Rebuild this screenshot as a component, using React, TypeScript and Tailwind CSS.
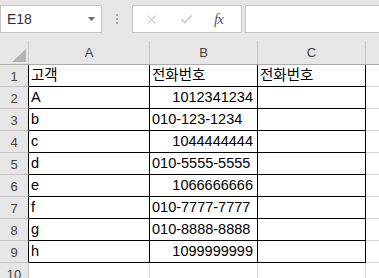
import { X, Check } from "lucide-react";

const rows: { a: string; b: string; right?: boolean; c: string }[] = [
  { a: "고객", b: "전화번호", c: "전화번호" },
  { a: "A", b: "1012341234", right: true, c: "" },
  { a: "b", b: "010-123-1234", c: "" },
  { a: "c", b: "1044444444", right: true, c: "" },
  { a: "d", b: "010-5555-5555", c: "" },
  { a: "e", b: "1066666666", right: true, c: "" },
  { a: "f", b: "010-7777-7777", c: "" },
  { a: "g", b: "010-8888-8888", c: "" },
  { a: "h", b: "1099999999", right: true, c: "" },
];

const font = "font-['Liberation_Sans','Noto_Sans_CJK_KR',sans-serif]";

function Toolbar() {
  return (
    <div className="h-[41px] flex items-start pt-[5px] bg-[#e6e6e6]">
      <div className="w-[102px] h-[28px] bg-white border border-[#c6c6c6] flex items-center pl-[6px] pr-[6px]">
        <span className="flex-1 text-[14px] text-[#333]">E18</span>
        <svg width="7" height="4" viewBox="0 0 7 4">
          <polygon points="0,0 7,0 3.5,4" fill="#6b6b6b" />
        </svg>
      </div>
      <div className="w-[30px] h-[28px] flex flex-col items-center justify-center gap-[2px]">
        <span className="w-[2px] h-[2px] bg-[#a6a6a6]" />
        <span className="w-[2px] h-[2px] bg-[#a6a6a6]" />
        <span className="w-[2px] h-[2px] bg-[#a6a6a6]" />
      </div>
      <div className="w-[110px] h-[28px] bg-white border border-[#c6c6c6] flex items-center pl-[11px]">
        <X className="w-[15px] h-[15px] text-[#bdbdbd]" strokeWidth={1.5} />
        <Check className="w-[15px] h-[15px] text-[#bdbdbd] ml-[20px]" strokeWidth={1.8} />
        <span className="ml-[20px] font-['Liberation_Serif',serif] italic text-[15px] text-[#5a5a5a] tracking-[-1px]">
          fx
        </span>
      </div>
      <div className="flex-1 ml-[3px] h-[28px] bg-white border border-[#c6c6c6] border-r-0" />
    </div>
  );
}

function HeaderRow() {
  return (
    <div className="flex h-[24px] border-b border-[#ababab] bg-[#e6e6e6] text-[13px] text-[#444]">
      <div className="w-[29px] shrink-0 border-r border-[#c6c6c6] flex items-end justify-end pr-[2px] pb-[2px]">
        <svg width="14" height="13" viewBox="0 0 14 13">
          <polygon points="14,0 14,13 0,13" fill="#b4b4b4" />
        </svg>
      </div>
      <div className="w-[121px] shrink-0 border-r border-[#c6c6c6] flex items-center justify-center">A</div>
      <div className="w-[108px] shrink-0 border-r border-[#c6c6c6] flex items-center justify-center">B</div>
      <div className="w-[108px] shrink-0 border-r border-[#c6c6c6] flex items-center justify-center">C</div>
      <div className="flex-1" />
    </div>
  );
}

export default function App() {
  return (
    <div className={`w-[379px] h-[278px] overflow-hidden bg-white ${font}`}>
      <Toolbar />
      <HeaderRow />
      {rows.map((r, i) => (
        <div key={i} className="flex h-[22px]">
          <div className="w-[29px] shrink-0 bg-[#e6e6e6] border-r border-r-black border-b border-b-[#c6c6c6] text-[13px] text-[#444] leading-[21px] pt-[1px] text-center">
            {i + 1}
          </div>
          <div className="w-[121px] shrink-0 border-r border-b border-black text-[14.5px] leading-[21px] pl-[2px] text-black">
            {r.a}
          </div>
          <div
            className={`w-[108px] shrink-0 border-r border-b border-black text-[14.5px] leading-[21px] text-black ${
              r.right ? "text-right pr-[4px]" : "pl-[2px]"
            }`}
          >
            {r.b}
          </div>
          <div className="w-[108px] shrink-0 border-r border-b border-black text-[14.5px] leading-[21px] pl-[2px] text-black">
            {r.c}
          </div>
          <div className="flex-1 border-b border-[#d4d4d4]" />
        </div>
      ))}
      <div className="flex h-[22px]">
        <div className="w-[29px] shrink-0 bg-[#e6e6e6] border-r border-[#c6c6c6] text-[13px] text-[#444] leading-[21px] pt-[1px] text-center">
          10
        </div>
        <div className="w-[121px] shrink-0 border-r border-[#d4d4d4]" />
        <div className="w-[108px] shrink-0 border-r border-[#d4d4d4]" />
        <div className="w-[108px] shrink-0 border-r border-[#d4d4d4]" />
        <div className="flex-1" />
      </div>
    </div>
  );
}
